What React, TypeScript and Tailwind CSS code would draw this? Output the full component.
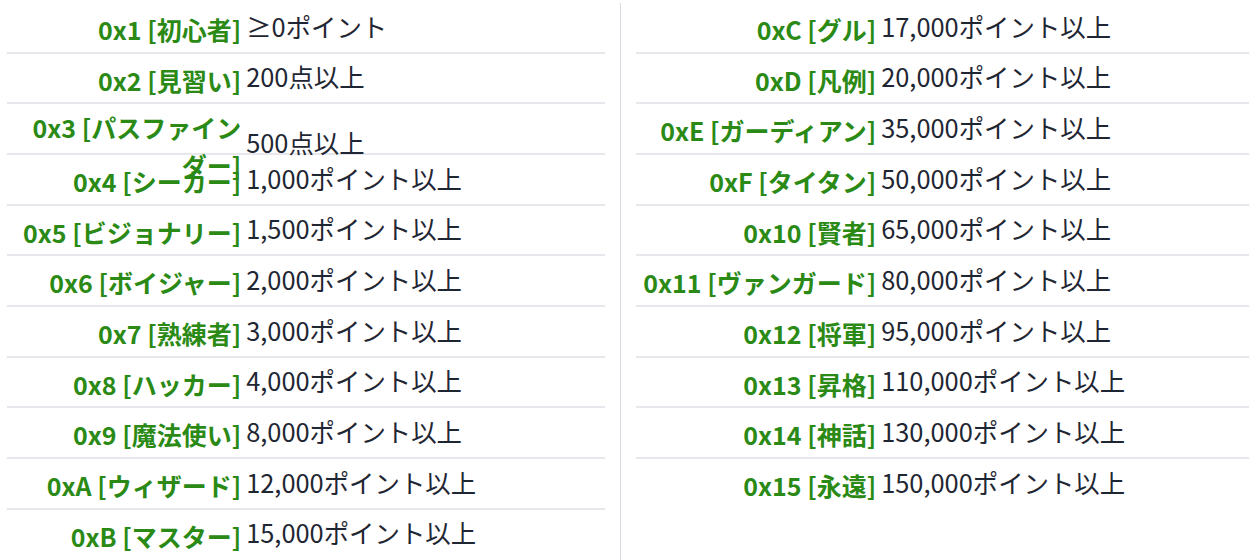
import React from "react";

type Item = { code: string; name: string; value: string };

const left: Item[] = [
  { code: "0x1", name: "初心者", value: "≥0ポイント" },
  { code: "0x2", name: "見習い", value: "200点以上" },
  { code: "0x3", name: "パスファインダー", value: "500点以上" },
  { code: "0x4", name: "シーカー", value: "1,000ポイント以上" },
  { code: "0x5", name: "ビジョナリー", value: "1,500ポイント以上" },
  { code: "0x6", name: "ボイジャー", value: "2,000ポイント以上" },
  { code: "0x7", name: "熟練者", value: "3,000ポイント以上" },
  { code: "0x8", name: "ハッカー", value: "4,000ポイント以上" },
  { code: "0x9", name: "魔法使い", value: "8,000ポイント以上" },
  { code: "0xA", name: "ウィザード", value: "12,000ポイント以上" },
  { code: "0xB", name: "マスター", value: "15,000ポイント以上" },
];

const right: Item[] = [
  { code: "0xC", name: "グル", value: "17,000ポイント以上" },
  { code: "0xD", name: "凡例", value: "20,000ポイント以上" },
  { code: "0xE", name: "ガーディアン", value: "35,000ポイント以上" },
  { code: "0xF", name: "タイタン", value: "50,000ポイント以上" },
  { code: "0x10", name: "賢者", value: "65,000ポイント以上" },
  { code: "0x11", name: "ヴァンガード", value: "80,000ポイント以上" },
  { code: "0x12", name: "将軍", value: "95,000ポイント以上" },
  { code: "0x13", name: "昇格", value: "110,000ポイント以上" },
  { code: "0x14", name: "神話", value: "130,000ポイント以上" },
  { code: "0x15", name: "永遠", value: "150,000ポイント以上" },
];

function Row({ item, narrow }: { item: Item; narrow: boolean }) {
  return (
    <div className="h-[50.67px] border-b-2 border-[#e7e7ed] last:border-b-0 pt-[4.7px] leading-[37.5px]">
      <span
        className={
          narrow
            ? "inline-block w-[40%] pl-[8px] pr-[5px] text-right align-middle font-bold text-[#2a8a15]"
            : "inline-block w-[40%] pl-0 pr-[5px] text-right align-middle font-bold text-[#2a8a15]"
        }
      >
        {item.code} [{item.name}]
      </span>
      <span className="text-[25.4px] text-[#1f2633]">{item.value}</span>
    </div>
  );
}

export default function App() {
  return (
    <div className="flex h-[560px] overflow-hidden bg-white pt-[3px] pl-[7px] text-[25px] font-['Noto_Sans_CJK_JP','Noto_Sans',sans-serif]">
      <div className="w-[598px] shrink-0">
        {left.map((it) => (
          <Row key={it.code} item={it} narrow={true} />
        ))}
      </div>
      <div className="mx-[15px] w-px shrink-0 bg-[#d9d9e1]" />
      <div className="w-[613px] shrink-0">
        {right.map((it) => (
          <Row key={it.code} item={it} narrow={false} />
        ))}
      </div>
    </div>
  );
}
